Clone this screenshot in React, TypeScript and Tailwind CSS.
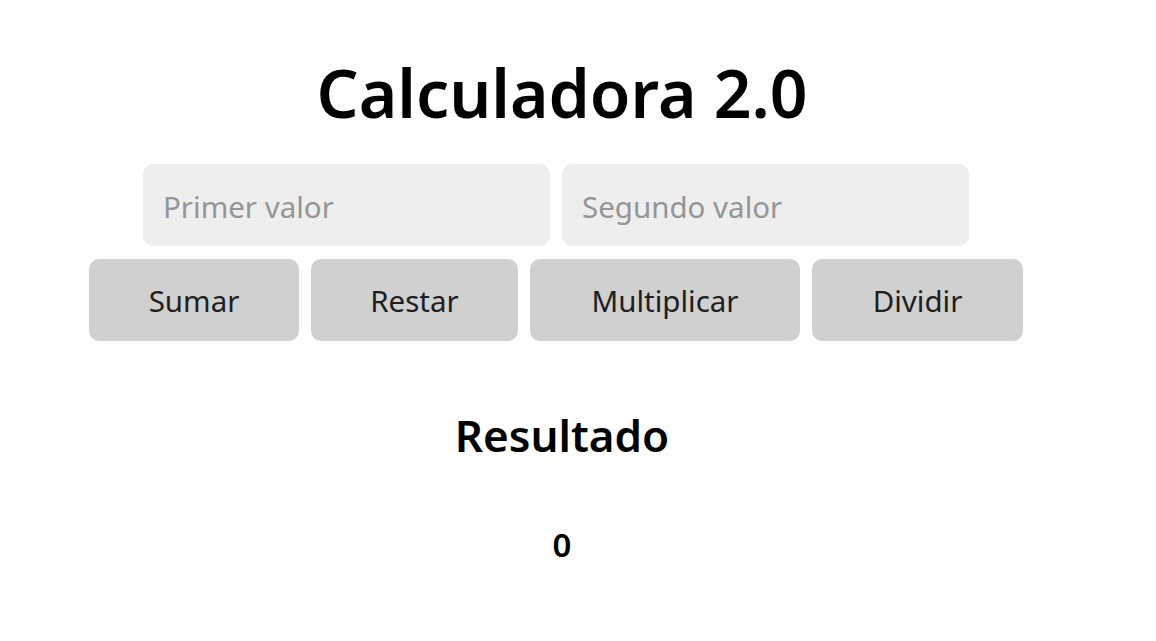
import React, { useState } from 'react';

function App() {
  const [a, setA] = useState('');
  const [b, setB] = useState('');
  const [resultado, setResultado] = useState<number>(0);

  const calc = (op: string) => {
    const x = parseFloat(a) || 0;
    const y = parseFloat(b) || 0;
    if (op === 'sumar') setResultado(x + y);
    if (op === 'restar') setResultado(x - y);
    if (op === 'multiplicar') setResultado(x * y);
    if (op === 'dividir') setResultado(y === 0 ? 0 : x / y);
  };

  return (
    <div className="min-h-screen bg-white font-['Noto_Sans','Open_Sans',sans-serif] text-black">
      <div className="w-[1124px] flex flex-col items-center pt-[44px]">
        <h1 className="text-[66px] leading-[96px] font-semibold">Calculadora 2.0</h1>
        <div className="flex mt-[24px]">
          <input
            value={a}
            onChange={(e) => setA(e.target.value)}
            placeholder="Primer valor"
            className="w-[407px] h-[82px] mr-3 rounded-[10px] bg-[#eeeeee] px-5 pt-[3px] text-[29.5px] text-[#222] placeholder:text-[#959595] outline-none"
          />
          <input
            value={b}
            onChange={(e) => setB(e.target.value)}
            placeholder="Segundo valor"
            className="w-[407px] h-[82px] mr-3 rounded-[10px] bg-[#eeeeee] px-5 pt-[3px] text-[29.5px] text-[#222] placeholder:text-[#959595] outline-none"
          />
        </div>
        <div className="flex mt-[13px]">
          {[
            ['Sumar', 'sumar', 'w-[210px]'],
            ['Restar', 'restar', 'w-[207px]'],
            ['Multiplicar', 'multiplicar', 'w-[270px]'],
            ['Dividir', 'dividir', 'w-[211px]'],
          ].map(([label, op, w]) => (
            <button
              key={op}
              onClick={() => calc(op)}
              className={`${w} h-[82px] mr-3 rounded-[10px] bg-[#d0d0d0] pt-[2px] text-[29.5px] text-[#1e1e1e]`}
            >
              {label}
            </button>
          ))}
        </div>
        <h2 className="mt-[64px] text-[44px] leading-[60px] font-semibold">Resultado</h2>
        <p className="mt-[58px] text-[33px] leading-[44px] font-semibold">{resultado}</p>
      </div>
    </div>
  );
}

export default App;
